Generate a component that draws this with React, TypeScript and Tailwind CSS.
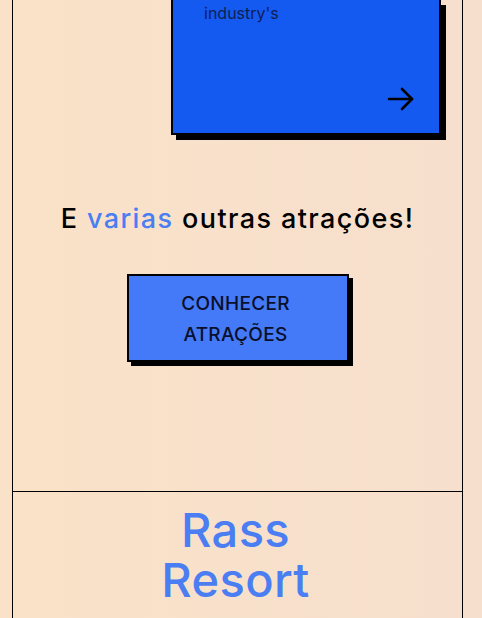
import React from "react";

export default function App() {
  return (
    <div
      className="w-[482px] h-[618px] overflow-hidden pl-[12px] pr-[19px] bg-gradient-to-r from-[#fae2c8] to-[#f6dfcd]"
      style={{ fontFamily: "Inter, 'Noto Sans', sans-serif" }}
    >
      <div className="border-x border-black h-full flex flex-col">
        <div className="h-[492px] shrink-0 border-b border-black flex flex-col">
          <div className="flex pl-[158px]">
            <div className="w-[270px] h-[135px] bg-[#1459f0] border-2 border-t-0 border-black shadow-[5px_5px_0_0_#000] flex flex-col pl-[31px] pr-[24px] pb-[22px]">
              <p className="text-[16px] leading-[20px] text-[#0f1f55] mt-[3px]">industry's</p>
              <div className="mt-auto flex justify-end">
                <svg width="28" height="24" viewBox="0 0 28 24" fill="none" stroke="#000" strokeWidth="2.6" strokeLinecap="round" strokeLinejoin="round">
                  <path d="M2 12 H25" />
                  <path d="M15 2 L25 12 L15 22" />
                </svg>
              </div>
            </div>
          </div>
          <h2 className="mt-[66px] text-center text-[27px] leading-[36px] font-medium text-black tracking-[1.4px]">
            E <span className="text-[#4a7ef2]">varias</span> outras atrações!
          </h2>
          <div className="flex justify-center mt-[37px]">
            <div className="w-[222px] h-[88px] bg-[#4479f8] border-2 border-black shadow-[4px_4px_0_0_#000] flex flex-col items-center justify-center pr-[4px] pt-[2px]">
              <span className="text-[19px] leading-[31px] font-medium text-[#0a0f2a] text-center tracking-[0.3px]">
                CONHECER
                <br />
                ATRAÇÕES
              </span>
            </div>
          </div>
        </div>
        <div className="flex flex-col items-center pt-[13px] pr-[4px] text-[47px] leading-[50px] font-medium text-[#4a7ef2] tracking-[0.4px]">
          <span>Rass</span>
          <span>Resort</span>
        </div>
      </div>
    </div>
  );
}
